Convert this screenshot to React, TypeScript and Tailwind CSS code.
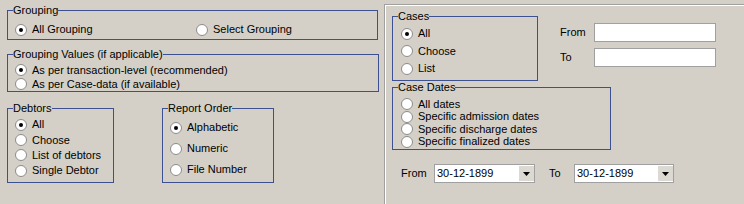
import React from "react";

function Radio({ checked }: { checked?: boolean }) {
  return (
    <span className="w-[12px] h-[12px] rounded-full bg-white border border-[#8c8c8c] flex items-center justify-center shrink-0">
      {checked && <span className="w-[4px] h-[4px] rounded-full bg-black" />}
    </span>
  );
}

function Item({
  label,
  checked,
  className = "",
}: {
  label: string;
  checked?: boolean;
  className?: string;
}) {
  return (
    <div className={`flex items-center gap-[5px] whitespace-nowrap ${className}`}>
      <Radio checked={checked} />
      <span>{label}</span>
    </div>
  );
}

function Group({
  title,
  className = "",
  children,
}: {
  title: string;
  className?: string;
  children?: React.ReactNode;
}) {
  return (
    <div className={`relative border border-[#3d5192] ${className}`}>
      <span className="absolute left-[5px] -top-[7px] leading-[13px] bg-[#d4d0c8] whitespace-nowrap">
        {title}
      </span>
      {children}
    </div>
  );
}

function Combo({ value, className = "" }: { value: string; className?: string }) {
  return (
    <div className={`h-[19px] bg-white border border-[#a0a0a0] flex ${className}`}>
      <span className="flex-1 pl-[2px] leading-[17px]">{value}</span>
      <span className="w-[15px] my-[1px] bg-[#dcd9d3] flex items-center justify-center">
        <svg width="7" height="4" viewBox="0 0 7 4">
          <polygon points="0,0 7,0 3.5,4" fill="#000" />
        </svg>
      </span>
    </div>
  );
}

export default function App() {
  return (
    <div className="w-[744px] h-[204px] bg-[#d4d0c8] flex text-[11px] leading-[13px] text-black font-['Liberation_Sans',Arial,sans-serif] overflow-hidden">
      {/* Left column */}
      <div className="w-[384px] shrink-0 pl-[7px] pt-[10px] flex flex-col">
        <Group title="Grouping" className="w-[371px] h-[30px] pl-[7px] pt-[12px]">
          <div className="flex">
            <Item label="All Grouping" checked className="w-[181px] h-[13px]" />
            <Item label="Select Grouping" className="h-[13px]" />
          </div>
        </Group>
        <Group
          title="Grouping Values (if applicable)"
          className="mt-[14px] w-[372px] h-[38px] pl-[7px] pt-[8px]"
        >
          <Item label="As per transaction-level (recommended)" checked className="h-[14px]" />
          <Item label="As per Case-data (if available)" className="h-[14px]" />
        </Group>
        <div className="mt-[16px] flex gap-[48px]">
          <Group title="Debtors" className="w-[107px] h-[75px] pl-[7px] pt-[8px]">
            <Item label="All" checked className="h-[15.4px]" />
            <Item label="Choose" className="h-[15.4px]" />
            <Item label="List of debtors" className="h-[15.4px]" />
            <Item label="Single Debtor" className="h-[15.4px]" />
          </Group>
          <Group title="Report Order" className="w-[112px] h-[75px] pl-[7px] pt-[8px]">
            <Item label="Alphabetic" checked className="h-[21px]" />
            <Item label="Numeric" className="h-[21px]" />
            <Item label="File Number" className="h-[21px]" />
          </Group>
        </div>
      </div>

      {/* Right panel */}
      <div className="flex-1 mt-[4px] border-t border-l border-[#a0a0a0] shadow-[inset_1px_1px_0_#ffffff] pl-[7px] pt-[11px]">
        <div className="flex">
          <Group title="Cases" className="w-[146px] h-[65px] pl-[8px] pt-[8px] shrink-0">
            <Item label="All" checked className="h-[17.6px] gap-[4px]" />
            <Item label="Choose" className="h-[17.6px] gap-[4px]" />
            <Item label="List" className="h-[17.6px] gap-[4px]" />
          </Group>
          <div className="ml-[22px] mt-[7px] flex flex-col gap-[6px]">
            <div className="flex items-center">
              <span className="w-[34px]">From</span>
              <div className="w-[122px] h-[19px] bg-white border border-[#a0a0a0]" />
            </div>
            <div className="flex items-center">
              <span className="w-[34px]">To</span>
              <div className="w-[122px] h-[19px] bg-white border border-[#a0a0a0]" />
            </div>
          </div>
        </div>
        <Group title="Case Dates" className="mt-[6px] w-[219px] h-[63px] pl-[8px] pt-[10px]">
          <Item label="All dates" className="h-[12.5px]" />
          <Item label="Specific admission dates" className="h-[12.5px]" />
          <Item label="Specific discharge dates" className="h-[12.5px]" />
          <Item label="Specific finalized dates" className="h-[12.5px]" />
        </Group>
        <div className="mt-[14px] ml-[9px] flex items-center">
          <span className="w-[33px]">From</span>
          <Combo value="30-12-1899" className="w-[101px]" />
          <span className="ml-[14px] w-[25px]">To</span>
          <Combo value="30-12-1899" className="w-[100px]" />
        </div>
      </div>
    </div>
  );
}
